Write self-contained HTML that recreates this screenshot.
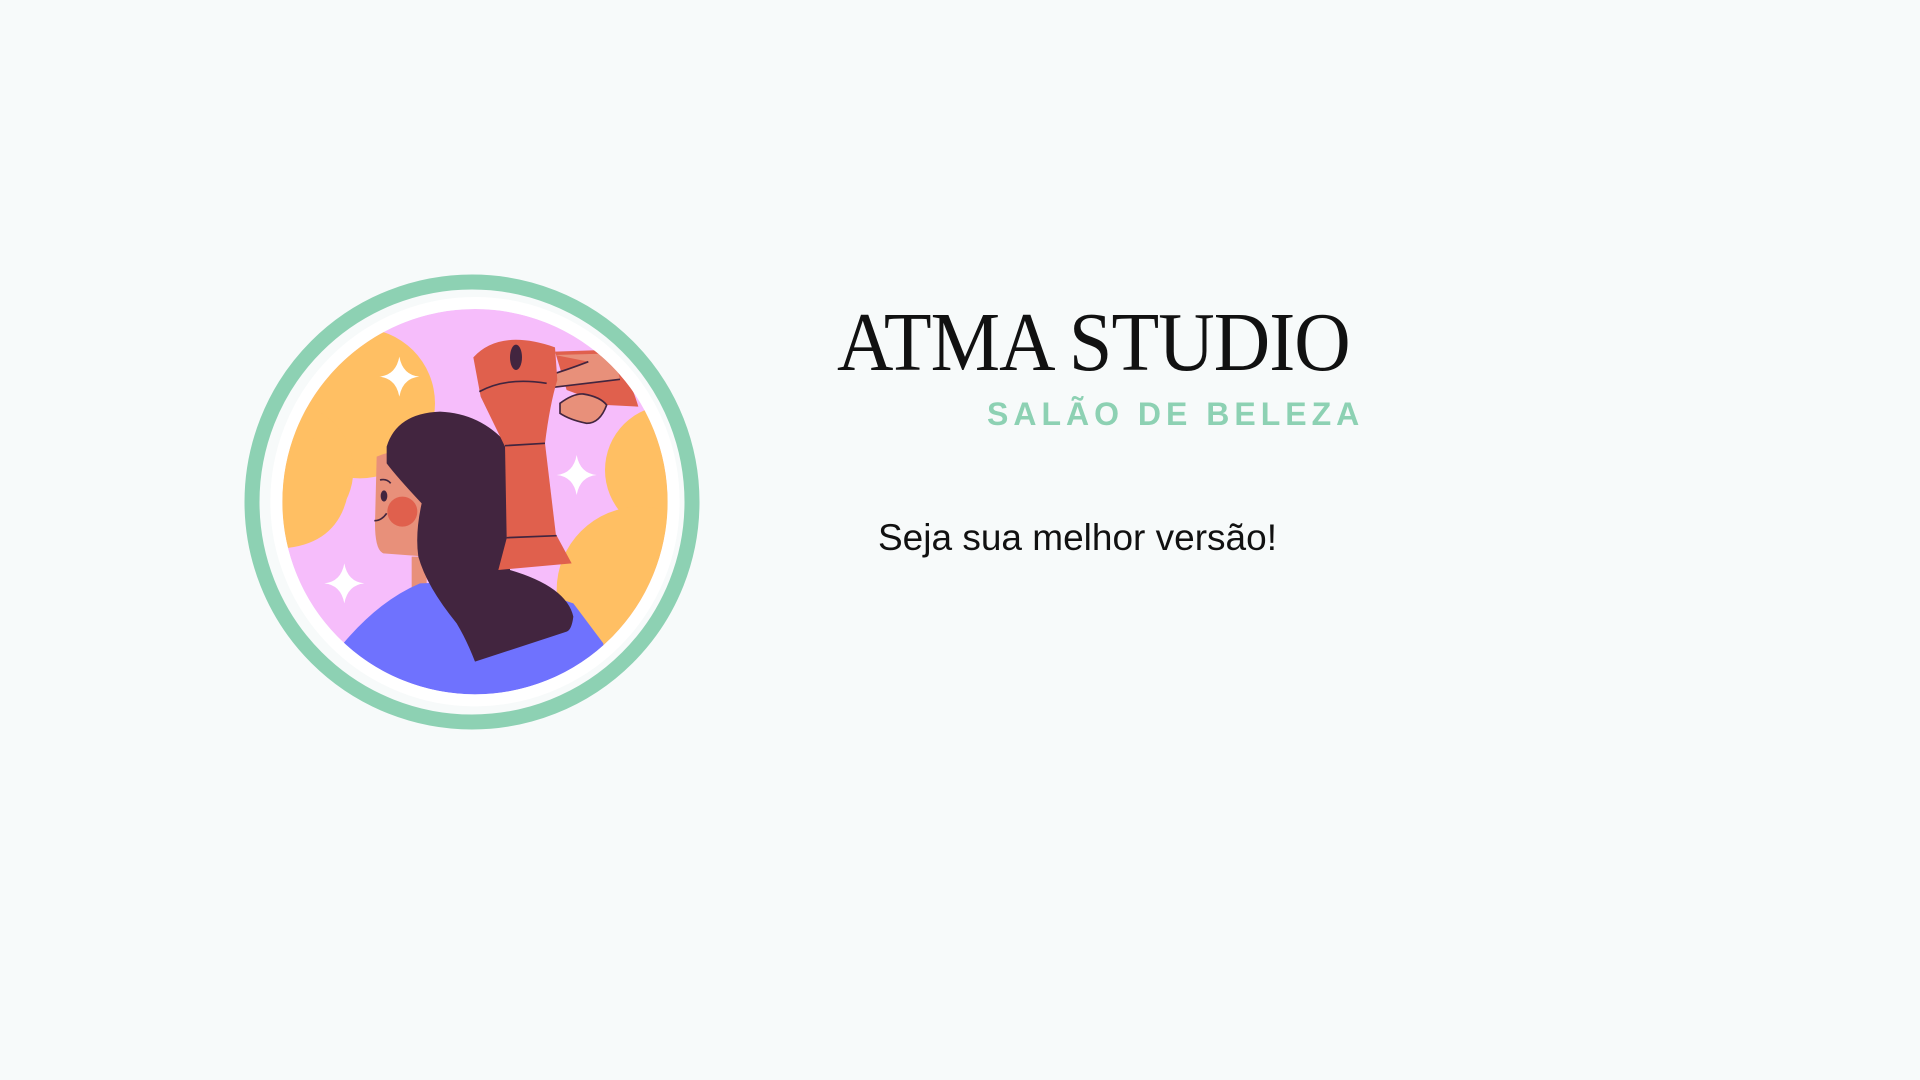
<!DOCTYPE html>
<html><head><meta charset="utf-8"><style>
html,body{margin:0;width:1920px;height:1080px;overflow:hidden;background:#f7fafa;}
.t{position:absolute;white-space:nowrap;}
</style></head><body>
<svg width="1920" height="1080" style="position:absolute;left:0;top:0">
<defs><clipPath id="c"><circle cx="705" cy="695" r="578"/></clipPath></defs>
<circle cx="472" cy="502" r="220" fill="none" stroke="#8dd1b3" stroke-width="15"/>
<g transform="translate(240,270) scale(0.33333)">
<g clip-path="url(#c)">
<rect x="0" y="0" width="1410" height="1410" fill="#f6bdfb"/>
<circle cx="360" cy="400" r="225" fill="#ffbf63"/>
<circle cx="140" cy="600" r="200" fill="#ffbf63"/>
<path d="M120,400 L330,620 Q320,820 130,835 Z" fill="#ffbf63"/>
<circle cx="1290" cy="600" r="195" fill="#ffbf63"/>
<circle cx="1200" cy="960" r="250" fill="#ffbf63"/>
<path d="M515,860 L560,860 L560,960 L515,960 Z" fill="#e8907a"/>
<path d="M310,1120 Q420,990 540,940 Q800,930 1000,1000 L1090,1120 L1100,1400 L300,1400 Z" fill="#6f72fe"/>
<path d="M410,560 Q500,520 540,600 L560,860 L430,850 Q405,840 405,760 Z" fill="#e8907a"/>
<circle cx="487" cy="725" r="45" fill="#e0604d"/>
<ellipse cx="432" cy="678" rx="10" ry="17" fill="#42253f"/>
<path d="M403,752 Q425,752 440,730" fill="none" stroke="#42253f" stroke-width="5"/>
<path d="M420,630 Q440,625 452,640" fill="none" stroke="#42253f" stroke-width="5"/>
<path d="M440,530 Q470,430 600,425 Q720,430 800,520 L810,900 Q980,950 1000,1040 Q995,1080 980,1085 L705,1175 Q680,1110 650,1060 Q560,950 535,860 Q525,790 545,700 Q470,620 440,580 Z" fill="#42253f"/>
<path d="M945,245 L1090,240 Q1160,290 1195,410 L1100,405 L980,360 Z" fill="#e0604d"/>
<path d="M945,255 L1045,275 Q980,300 920,318 Q910,345 940,352 Q1040,340 1140,328 L1120,250 Z" fill="#e8907a"/>
<path d="M1045,275 Q980,300 920,318 Q910,345 940,352 Q1040,340 1140,328" fill="none" stroke="#42253f" stroke-width="5"/>
<path d="M700,262 Q780,175 945,232 L952,330 Q930,400 915,520 L795,530 L722,380 Z" fill="#e0604d"/>
<path d="M718,365 Q800,320 920,340" fill="none" stroke="#42253f" stroke-width="5"/>
<ellipse cx="828" cy="262" rx="18" ry="38" fill="#42253f"/>
<path d="M960,400 Q1000,370 1030,372 Q1080,380 1100,405 Q1080,460 1040,460 Q990,450 960,430 Z" fill="#e8907a" stroke="#42253f" stroke-width="5"/>
<path d="M795,525 L915,520 L948,797 L800,803 Z" fill="#e0604d"/>
<path d="M800,805 L950,797 L995,880 L775,900 Z" fill="#e0604d"/>
<path d="M800,803 L950,797 M795,527 L915,520" stroke="#42253f" stroke-width="5"/>
<g fill="#fff">
<path d="M478,260 Q488,315 538,320 Q488,325 478,380 Q468,325 418,320 Q468,315 478,260Z"/>
<path d="M1010,555 Q1020,610 1070,615 Q1020,620 1010,675 Q1000,620 950,615 Q1000,610 1010,555Z"/>
<path d="M313,880 Q323,935 373,940 Q323,945 313,1000 Q303,945 253,940 Q303,935 313,880Z"/>
</g>
</g>
<circle cx="705" cy="695" r="596" fill="none" stroke="#fff" stroke-width="36"/>
</g>
</svg>
<div class="t" style="left:837px;top:294px;font:84px 'Liberation Serif',serif;color:#111;transform-origin:0 0;transform:scaleX(0.93);letter-spacing:-1px">ATMA STUDIO</div>
<div class="t" style="left:987px;top:396px;font:bold 32px 'Liberation Sans',sans-serif;color:#8dd1b3;letter-spacing:5px">SALÃO DE BELEZA</div>
<div class="t" style="left:878px;top:517px;font:37px 'Liberation Sans',sans-serif;color:#111;">Seja sua melhor versão!</div>
</body></html>
